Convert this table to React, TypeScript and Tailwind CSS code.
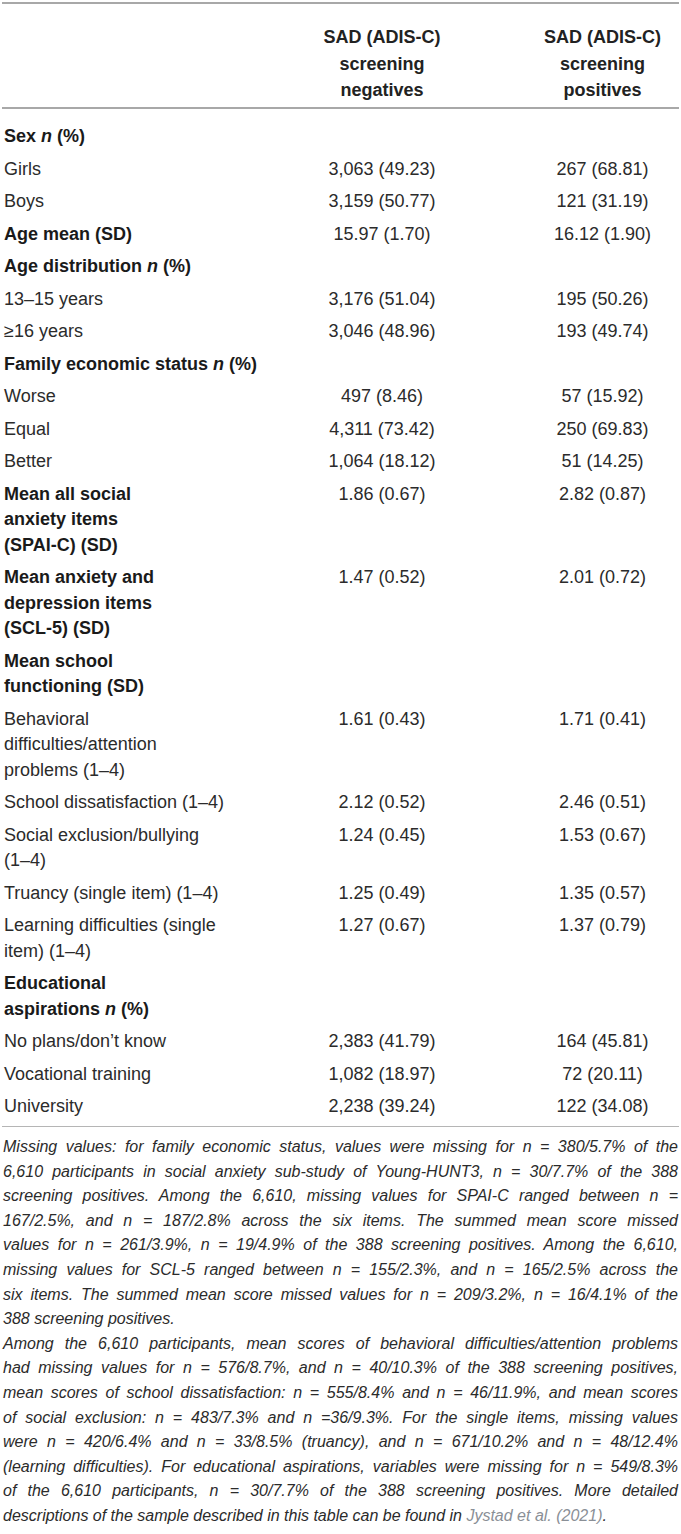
import React from 'react';

type RowData = {
  label: React.ReactNode;
  a?: string;
  b?: string;
  bold?: boolean;
  span?: boolean;
};

const N = () => <span className="italic">n</span>;

const rows: RowData[] = [
  { label: <>Sex <N /> (%)</>, bold: true, span: true },
  { label: 'Girls', a: '3,063 (49.23)', b: '267 (68.81)' },
  { label: 'Boys', a: '3,159 (50.77)', b: '121 (31.19)' },
  { label: 'Age mean (SD)', a: '15.97 (1.70)', b: '16.12 (1.90)', bold: true },
  { label: <>Age distribution <N /> (%)</>, bold: true, span: true },
  { label: '13–15 years', a: '3,176 (51.04)', b: '195 (50.26)' },
  { label: '≥16 years', a: '3,046 (48.96)', b: '193 (49.74)' },
  { label: <>Family economic status <N /> (%)</>, bold: true, span: true },
  { label: 'Worse', a: '497 (8.46)', b: '57 (15.92)' },
  { label: 'Equal', a: '4,311 (73.42)', b: '250 (69.83)' },
  { label: 'Better', a: '1,064 (18.12)', b: '51 (14.25)' },
  {
    label: <>Mean all social<br />anxiety items<br />(SPAI-C) (SD)</>,
    a: '1.86 (0.67)',
    b: '2.82 (0.87)',
    bold: true,
  },
  {
    label: <>Mean anxiety and<br />depression items<br />(SCL-5) (SD)</>,
    a: '1.47 (0.52)',
    b: '2.01 (0.72)',
    bold: true,
  },
  { label: <>Mean school<br />functioning (SD)</>, bold: true },
  {
    label: <>Behavioral<br />difficulties/attention<br />problems (1–4)</>,
    a: '1.61 (0.43)',
    b: '1.71 (0.41)',
  },
  { label: 'School dissatisfaction (1–4)', a: '2.12 (0.52)', b: '2.46 (0.51)' },
  { label: <>Social exclusion/bullying<br />(1–4)</>, a: '1.24 (0.45)', b: '1.53 (0.67)' },
  { label: 'Truancy (single item) (1–4)', a: '1.25 (0.49)', b: '1.35 (0.57)' },
  { label: <>Learning difficulties (single<br />item) (1–4)</>, a: '1.27 (0.67)', b: '1.37 (0.79)' },
  { label: <>Educational<br />aspirations <N /> (%)</>, bold: true },
  { label: 'No plans/don’t know', a: '2,383 (41.79)', b: '164 (45.81)' },
  { label: 'Vocational training', a: '1,082 (18.97)', b: '72 (20.11)' },
  { label: 'University', a: '2,238 (39.24)', b: '122 (34.08)' },
];

const notes: { text: React.ReactNode; last?: boolean }[] = [
  { text: <>Missing values: for family economic status, values were missing for n = 380/5.7% of the</> },
  { text: <>6,610 participants in social anxiety sub-study of Young-HUNT3, n = 30/7.7% of the 388</> },
  { text: <>screening positives. Among the 6,610, missing values for SPAI-C ranged between n =</> },
  { text: <>167/2.5%, and n = 187/2.8% across the six items. The summed mean score missed</> },
  { text: <>values for n = 261/3.9%, n = 19/4.9% of the 388 screening positives. Among the 6,610,</> },
  { text: <>missing values for SCL-5 ranged between n = 155/2.3%, and n = 165/2.5% across the</> },
  { text: <>six items. The summed mean score missed values for n = 209/3.2%, n = 16/4.1% of the</> },
  { text: <>388 screening positives.</>, last: true },
  { text: <>Among the 6,610 participants, mean scores of behavioral difficulties/attention problems</> },
  { text: <>had missing values for n = 576/8.7%, and n = 40/10.3% of the 388 screening positives,</> },
  { text: <>mean scores of school dissatisfaction: n = 555/8.4% and n = 46/11.9%, and mean scores</> },
  { text: <>of social exclusion: n = 483/7.3% and n =36/9.3%. For the single items, missing values</> },
  { text: <>were n = 420/6.4% and n = 33/8.5% (truancy), and n = 671/10.2% and n = 48/12.4%</> },
  { text: <>(learning difficulties). For educational aspirations, variables were missing for n = 549/8.3%</> },
  { text: <>of the 6,610 participants, n = 30/7.7% of the 388 screening positives. More detailed</> },
  {
    text: (
      <>
        descriptions of the sample described in this table can be found in{' '}
        <span className="text-[#8a8f96]">Jystad et al. (2021)</span>.
      </>
    ),
    last: true,
  },
];

export default function App() {
  return (
    <div className="w-[681px] bg-white pt-[2px] font-[family-name:'Liberation_Sans',Arial,sans-serif] text-[18px] text-[#2b2b2b]">
      <div className="mx-[2px] h-[2px] bg-[#a8a8a8]" />

      <div className="grid grid-cols-[272px_220px_1fr] pt-[20px] pb-[3px] font-bold leading-[26.5px] text-[#222]">
        <div />
        <div className="text-center">
          SAD (ADIS-C)<br />screening<br />negatives
        </div>
        <div className="pl-[32px] text-center">
          SAD (ADIS-C)<br />screening<br />positives
        </div>
      </div>

      <div className="mx-[2px] h-[2px] bg-[#a8a8a8]" />

      <div className="pt-[12px] pb-[3px]">
        {rows.map((r, i) =>
          r.span ? (
            <div key={i} className="py-[3.5px] pl-[4px] font-bold leading-[25.5px] text-[#1a1a1a]">
              {r.label}
            </div>
          ) : (
            <div key={i} className="grid grid-cols-[272px_220px_1fr] py-[3.5px] leading-[25.5px]">
              <div className={r.bold ? 'pl-[4px] font-bold text-[#1a1a1a]' : 'pl-[4px]'}>{r.label}</div>
              <div className="text-center">{r.a}</div>
              <div className="pl-[32px] text-center">{r.b}</div>
            </div>
          ),
        )}
      </div>

      <div className="mx-[2px] h-px bg-[#b5b5b5]" />

      <div className="px-[3px] pt-[8px] text-[16px] italic leading-[24.6px] text-[#2b2b2b]">
        {notes.map((n, i) => (
          <div
            key={i}
            className={n.last ? 'whitespace-nowrap' : 'whitespace-nowrap text-justify [text-align-last:justify]'}
          >
            {n.text}
          </div>
        ))}
      </div>
    </div>
  );
}
